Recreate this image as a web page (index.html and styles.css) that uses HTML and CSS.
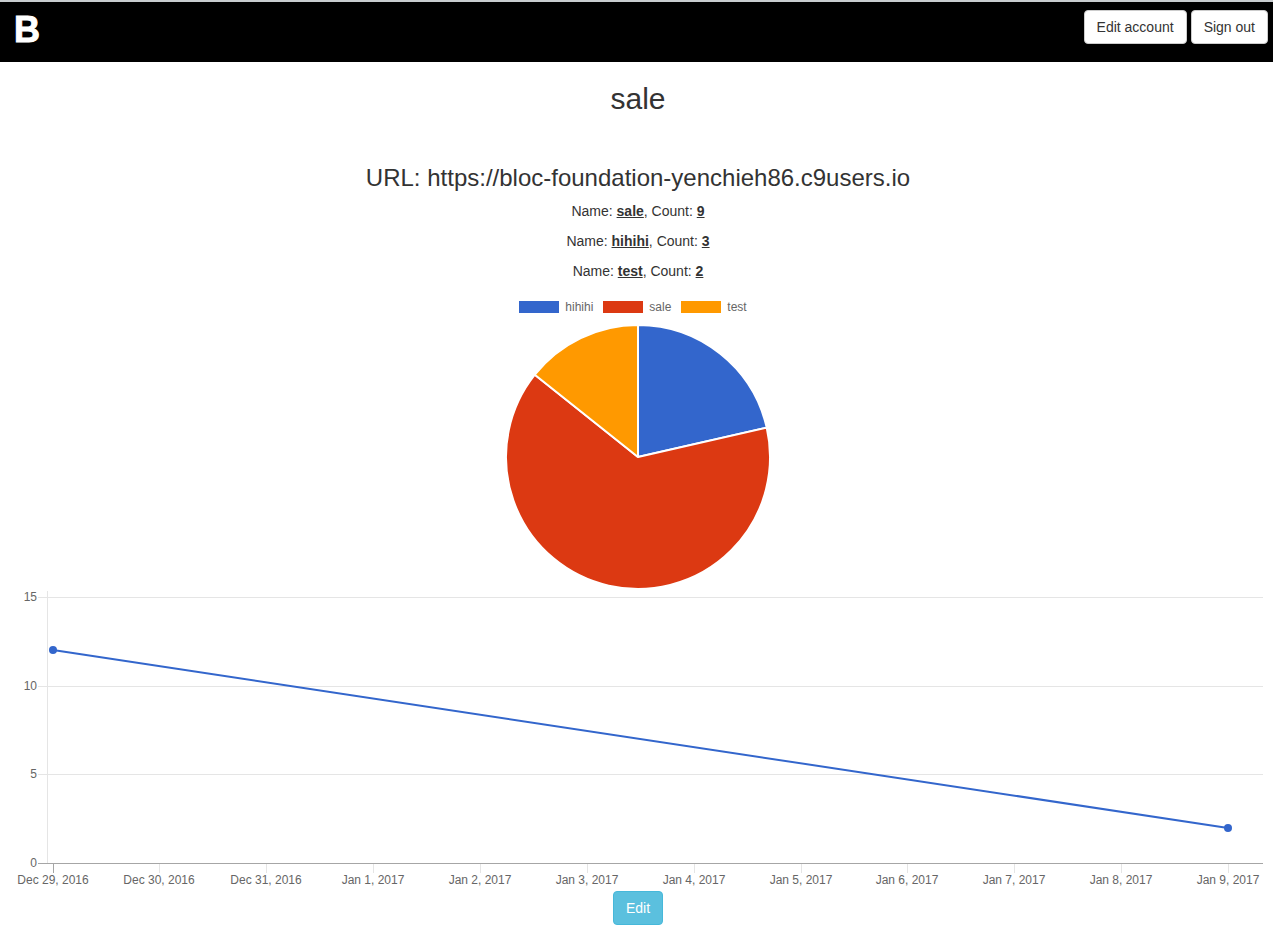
FILE: index.html
```
<!DOCTYPE html>
<html lang="en">
<head>
<meta charset="utf-8">
<title>sale</title>
<link rel="stylesheet" href="styles.css">
</head>
<body>
<header class="topbar">
  <a class="brand" href="#">B</a>
  <nav class="actions">
    <button class="btn" type="button">Edit account</button>
    <button class="btn" type="button">Sign out</button>
  </nav>
</header>
<main class="content">
  <h2 class="title">sale</h2>
  <h3 class="url">URL: https://bloc-foundation-yenchieh86.c9users.io</h3>
  <p class="event">Name: <strong class="mark">sale</strong>, Count: <strong class="mark">9</strong></p>
  <p class="event">Name: <strong class="mark">hihihi</strong>, Count: <strong class="mark">3</strong></p>
  <p class="event">Name: <strong class="mark">test</strong>, Count: <strong class="mark">2</strong></p>
  <ul class="legend">
    <li class="legend-item"><span class="swatch blue"></span>hihihi</li>
    <li class="legend-item"><span class="swatch red"></span>sale</li>
    <li class="legend-item"><span class="swatch orange"></span>test</li>
  </ul>
  <svg class="pie" viewBox="-133 -132 266 266" role="img" aria-label="Events by name">
    <g stroke="#fff" stroke-width="2" stroke-linejoin="bevel">
      <path fill="#3366cc" d="M0 0V-132A132 132 0 0 1 128.7-29.4Z"/>
      <path fill="#dc3912" d="M0 0L128.7-29.4A132 132 0 1 1-103.2-82.3Z"/>
      <path fill="#ff9900" d="M0 0L-103.2-82.3A132 132 0 0 1 0-132Z"/>
    </g>
  </svg>
  <svg class="line-chart" viewBox="0 0 1270 300" role="img" aria-label="Events by day">
    <path class="grid" d="M35 6.5H1260M35 95.5H1260M35 183.5H1260M44.5 0V272M156.5 273V282M263.5 273V282M370.5 273V282M477.5 273V282M584.5 273V282M691.5 273V282M798.5 273V282M904.5 273V282M1011.5 273V282M1118.5 273V282M1225.5 273V282"/>
    <path class="axis" d="M35 272.5H1260M50.5 273V282"/>
    <path class="series" d="M50 59L1225 237"/>
    <circle class="dot" cx="50" cy="59" r="4"/>
    <circle class="dot" cx="1225" cy="237" r="4"/>
    <g class="tick end">
      <text x="34" y="10">15</text>
      <text x="34" y="99">10</text>
      <text x="34" y="187">5</text>
      <text x="34" y="276">0</text>
    </g>
    <g class="tick middle">
      <text x="50" y="293">Dec 29, 2016</text>
      <text x="156" y="293">Dec 30, 2016</text>
      <text x="263" y="293">Dec 31, 2016</text>
      <text x="370" y="293">Jan 1, 2017</text>
      <text x="477" y="293">Jan 2, 2017</text>
      <text x="584" y="293">Jan 3, 2017</text>
      <text x="691" y="293">Jan 4, 2017</text>
      <text x="798" y="293">Jan 5, 2017</text>
      <text x="904" y="293">Jan 6, 2017</text>
      <text x="1011" y="293">Jan 7, 2017</text>
      <text x="1118" y="293">Jan 8, 2017</text>
      <text x="1225" y="293">Jan 9, 2017</text>
    </g>
  </svg>
  <button class="btn btn-info" type="button">Edit</button>
</main>
</body>
</html>
```

FILE: styles.css
```
* { box-sizing: border-box; }

body {
  margin: 0;
  background: #fff;
  color: #333;
  font: 14px/20px "Liberation Sans", Arial, sans-serif;
}

.topbar {
  display: flex;
  justify-content: space-between;
  align-items: flex-start;
  min-height: 62px;
  padding: 8px 5px 0 14px;
  border-top: 2px solid #c8cccf;
  background: #000;
}

.brand {
  color: #fff;
  font-size: 36px;
  font-weight: bold;
  line-height: 40px;
  text-decoration: none;
  -webkit-text-stroke: 1px #fff;
}

.actions {
  display: flex;
  gap: 4px;
}

.btn {
  padding: 6px 12px;
  border: 1px solid #ccc;
  border-radius: 4px;
  background: #fff;
  color: #333;
  font: inherit;
  cursor: pointer;
}

.btn-info {
  border-color: #46b8da;
  background: #5bc0de;
  color: #fff;
}

.content {
  display: flex;
  flex-direction: column;
  align-items: center;
  padding: 20px 0 0 3px;
}

.title {
  margin: 0 0 50px;
  font-size: 30px;
  font-weight: normal;
  line-height: 33px;
}

.url {
  margin: 0 0 10px;
  font-size: 24px;
  font-weight: normal;
  line-height: 26px;
}

.event { margin: 0 0 10px; }

.mark { text-decoration: underline; }

.legend {
  display: flex;
  gap: 10px;
  margin: 0;
  padding: 10px 10px 11px 0;
  list-style: none;
  color: #666;
  font-size: 12px;
  line-height: 13px;
}

.legend-item {
  display: flex;
  gap: 6px;
}

.swatch {
  width: 40px;
  height: 12px;
}

.blue { background: #3366cc; }
.red { background: #dc3912; }
.orange { background: #ff9900; }

.pie {
  display: block;
  width: 266px;
}

.line-chart {
  display: block;
  width: 100%;
}

.grid {
  fill: none;
  stroke: #e5e5e5;
}

.axis {
  fill: none;
  stroke: #a6a6a6;
}

.series {
  fill: none;
  stroke: #3366cc;
  stroke-width: 2;
}

.dot { fill: #3366cc; }

.tick {
  fill: #666;
  font-size: 12px;
}

.end { text-anchor: end; }
.middle { text-anchor: middle; }
```
